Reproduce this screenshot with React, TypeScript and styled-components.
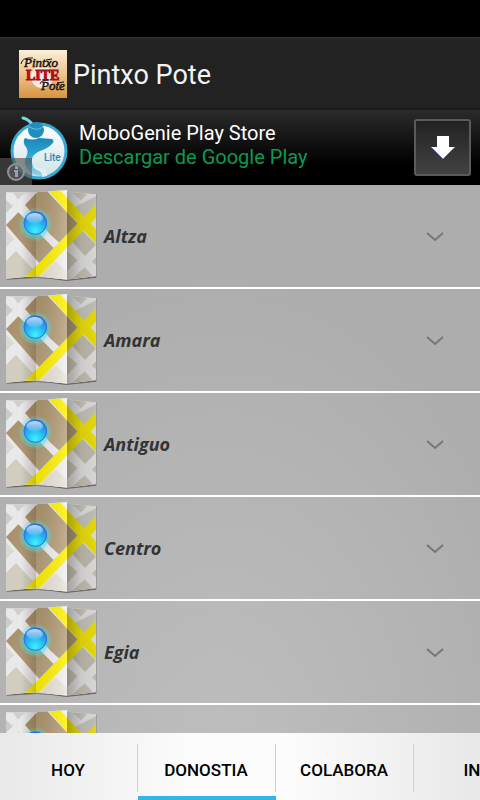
import React from "react";
import styled, { createGlobalStyle } from "styled-components";

const GlobalStyle = createGlobalStyle`
  * { box-sizing: border-box; }
  body { margin: 0; background: #000; font-family: Roboto, sans-serif; }
  button { font-family: inherit; border: 0; margin: 0; padding: 0; background: none; cursor: pointer; }
  svg { display: block; flex: none; }
`;

const Screen = styled.div`
  display: flex;
  flex-direction: column;
  height: 100vh;
  overflow: hidden;
`;

const StatusBar = styled.div`
  flex: none;
  height: 37px;
  background: #000;
`;

const ActionBar = styled.header`
  flex: none;
  display: flex;
  align-items: center;
  gap: 6px;
  height: 73px;
  padding: 0 19px 1px;
  background: linear-gradient(#222, #222 68px, #171717);
  border-top: 2px solid #2c2c2c;
`;

const Title = styled.h1`
  margin: 0;
  padding-top: 2px;
  font-size: 27px;
  line-height: 32px;
  font-weight: 400;
  color: #f3f3f3;
`;

const Ad = styled.section`
  position: relative;
  flex: none;
  display: flex;
  align-items: center;
  height: 75px;
  padding: 0 9px 0 8px;
  background: linear-gradient(#2b2b2b, #000 72%);
`;

const AdLink = styled.a`
  flex: 1;
  display: flex;
  align-items: center;
  gap: 11px;
  text-decoration: none;
`;

const AdText = styled.span`
  display: flex;
  flex-direction: column;
  padding-bottom: 6px;
  font-size: 20px;
  line-height: 24px;
  white-space: nowrap;
`;

const AdLine = styled.span<{ $green?: boolean }>`
  color: ${(p) => (p.$green ? "#0b9a50" : "#fff")};
`;

const Download = styled.button`
  display: flex;
  align-items: center;
  justify-content: center;
  width: 57px;
  height: 57px;
  border: 2px solid #5b5b5b;
  border-radius: 3px;
  background: linear-gradient(#222, #424242);
`;

const AdInfo = styled.button`
  position: absolute;
  left: 0;
  bottom: 0;
  display: flex;
  align-items: center;
  justify-content: center;
  width: 32px;
  height: 27px;
  background: rgba(85, 85, 85, 0.65);
`;

const List = styled.ul`
  flex: 1;
  min-height: 0;
  margin: 0;
  padding: 0;
  overflow: hidden;
  list-style: none;
  background: radial-gradient(ellipse 70% 90% at 46% 105%, #bebebe, #b6b6b6 50%, #adadad);
`;

const Row = styled.li`
  height: 104px;
  border-bottom: 2px solid #fff;
`;

const RowButton = styled.button`
  display: flex;
  align-items: center;
  gap: 4px;
  width: 100%;
  height: 102px;
  padding-right: 36px;
  text-align: left;
`;

const Name = styled.span`
  flex: 1;
  font: italic 700 18px/26px "Open Sans", sans-serif;
  color: #333;
`;

const Tabs = styled.nav`
  flex: none;
  display: flex;
  height: 67px;
  overflow: hidden;
  background: linear-gradient(90deg, #e9e9e9, #fcfcfc 40%, #fcfcfc 60%, #e8e8e8);
`;

const Tab = styled.button<{ $active?: boolean }>`
  flex: none;
  display: flex;
  align-items: center;
  justify-content: center;
  min-width: 138px;
  padding: 10px 18px 0 16px;
  border-bottom: 4px solid ${(p) => (p.$active ? "#33b5e5" : "transparent")};
  background: linear-gradient(#cfcfcf, #cfcfcf) right 0 top 11px / 1px 48px no-repeat;
  background-origin: border-box;
  font-size: 17px;
  line-height: 22px;
  font-weight: 500;
  color: #000;
`;

const WideTab = styled(Tab)`
  padding: 10px 48px 0 47px;
`;

const Script = styled.text`
  font: italic 400 13px "Liberation Serif", serif;
  fill: #181410;
  stroke: #181410;
  stroke-width: 0.5px;
`;

const Lite = styled.text`
  font: 700 14px "Liberation Serif", serif;
  fill: #c40d1c;
  stroke: #a80d18;
  stroke-width: 1px;
`;

const BadgeText = styled.text`
  font: 500 10px Roboto, sans-serif;
  fill: #2989b0;
`;

function AppLogo() {
  return (
    <svg width="48" height="48" viewBox="0 0 48 48" aria-hidden="true">
      <defs>
        <linearGradient id="sand" x1="0" y1="0" x2="0" y2="1">
          <stop offset="0" stopColor="#fcefd9" />
          <stop offset=".5" stopColor="#edc58b" />
          <stop offset="1" stopColor="#d79440" />
        </linearGradient>
      </defs>
      <path fill="url(#sand)" d="M0 0h48v48H0z" />
      <circle cx="23" cy="27" r="11" fill="#f5eee8" />
      <Script x="5" y="17">Pintxo</Script>
      <Lite x="7" y="30">LITE</Lite>
      <Script x="22" y="40">Pote</Script>
      <path d="M2 14Q3 7 14 8M27 10l6-1M21 34q1-4 9-4M38 33l7-1" fill="none" stroke="#181410" />
    </svg>
  );
}

function GenieLogo() {
  return (
    <svg width="60" height="66" viewBox="0 0 60 66" aria-hidden="true">
      <defs>
        <linearGradient id="genie" x1="0" y1="0" x2="0" y2="1">
          <stop offset="0" stopColor="#1c86b8" />
          <stop offset=".5" stopColor="#2cabd6" />
          <stop offset="1" stopColor="#9bd6e9" />
        </linearGradient>
        <linearGradient id="disc" x1="0" y1="0" x2="0" y2="1">
          <stop offset="0" stopColor="#fff" />
          <stop offset="1" stopColor="#cfe2e8" />
        </linearGradient>
      </defs>
      <circle cx="31" cy="36" r="27" fill="url(#disc)" stroke="#35a9d2" strokeWidth="3" />
      <path fill="url(#genie)" d="M17 23q8 3 14 0l13 1q3 2 0 5-5 5-12 7-10 4-8 12 2 5 8 7 5 2 4 6-13 1-17-8-4-5-1-11 3-5 0-10-4-5-1-9z" />
      <path fill="#e4eef1" d="M24 49q3 4 9 4 7 2 6 8l-5 1q1-4-3-6-6-2-7-7z" />
      <path d="M15 3q5 1 9 6" fill="none" stroke="#7bd6df" strokeWidth="3" strokeLinecap="round" />
      <circle cx="28" cy="15" r="8" fill="#238ebd" />
      <path d="M20 11q8 6 15 1" fill="none" stroke="#66c6dc" strokeWidth="1" />
      <BadgeText x="36" y="46">Lite</BadgeText>
    </svg>
  );
}

function InfoIcon() {
  return (
    <svg width="20" height="20" viewBox="0 0 20 20" aria-hidden="true">
      <circle cx="10" cy="10" r="8" fill="#5b6265" fillOpacity=".6" stroke="#8d9294" strokeWidth="2" />
      <path d="M8 8h4v7H9v-5H8zM9 4h3v3H9z" fill="#9aa0a2" />
    </svg>
  );
}

function MapArt() {
  return (
    <svg width="100" height="102" viewBox="0 0 300 306" aria-hidden="true">
      <path d="M20 274l89 3 92 6 88-9v4l-90 10q-45-8-90-9l-89 5z" fill="#4c4a46" opacity=".7" />
      <path d="M286 28h5v246h-5z" fill="#777" opacity=".4" />
      <g clipPath="url(#sheet)">
        <path d="M0 0h300v306H0z" fill="#f1f1f2" />
        <path d="M30 10h56L54 44z" fill="#d6d7d3" />
        <path d="M18 44l20 20-20 20z" fill="#d2d3cf" />
        <path d="M75 60l40-42h26l96 102-56 56-31-28z" fill="url(#earth)" />
        <path d="M18 120l37-38 112 113-46 43z" fill="url(#earth)" />
        <path d="M18 136l24 26-24 25z" fill="#e0e0de" />
        <path d="M18 228l30-30 76 82-14 10H18z" fill="#d8d4c6" />
        <path d="M122 272l44-44 36 32v30h-80z" fill="#e9e5db" />
        <path d="M214 168l31-34 43 45-33 34z" fill="#cfccbe" />
        <path d="M206 10h70l-33 36zM288 34v40l-32 30-32-38z" fill="#d4d4cc" />
        <path d="M201 198l32 28-32 32z" fill="#d3d0c2" />
        <path d="M216 283l38-36 26 28z" fill="#d3d0c2" />
        <path d="M276 230l13-14v26z" fill="#d3d0c2" />
        <path d="M148 0l152 168M300 66L80 292" fill="none" stroke="#fff20a" strokeWidth="28" />
        <path d="M18 10h90v280H18z" fill="url(#foldA)" />
        <path d="M108 10h93v280h-93z" fill="url(#foldB)" />
        <path d="M201 10h88v280h-88z" fill="url(#foldC)" />
        <circle cx="106" cy="118" r="52" fill="url(#glow)" />
      </g>
      <circle cx="106" cy="114" r="34" fill="url(#ball)" stroke="#2e72d2" strokeWidth="3" />
      <ellipse cx="104" cy="100" rx="25" ry="16" fill="url(#shine)" />
    </svg>
  );
}

function MapDefs() {
  return (
    <svg width="0" height="0" aria-hidden="true">
      <defs>
        <clipPath id="sheet">
          <path d="M18 22h90l93-7v5l87 8v245l-87 11-93-11-90 8z" />
        </clipPath>
        <linearGradient id="earth" x1="0" y1="0" x2="1" y2="1">
          <stop offset="0" stopColor="#ab946c" />
          <stop offset="1" stopColor="#bda684" />
        </linearGradient>
        <linearGradient id="foldA" x1="0" x2="1">
          <stop offset="0" stopColor="#30200f" stopOpacity=".04" />
          <stop offset=".5" stopColor="#30200f" stopOpacity=".04" />
          <stop offset="1" stopColor="#30200f" stopOpacity=".26" />
        </linearGradient>
        <linearGradient id="foldB" x1="0" x2="1">
          <stop offset="0" stopColor="#000" stopOpacity=".07" />
          <stop offset="1" stopColor="#fff" stopOpacity=".15" />
        </linearGradient>
        <linearGradient id="foldC" x1="0" x2="1">
          <stop offset="0" stopColor="#15130a" stopOpacity=".36" />
          <stop offset=".5" stopColor="#15130a" stopOpacity=".17" />
          <stop offset="1" stopColor="#15130a" stopOpacity=".12" />
        </linearGradient>
        <radialGradient id="glow">
          <stop offset=".5" stopColor="#25d7ed" stopOpacity=".9" />
          <stop offset="1" stopColor="#65e5ee" stopOpacity="0" />
        </radialGradient>
        <radialGradient id="ball" cx=".5" cy=".85" r=".8">
          <stop offset="0" stopColor="#42f2ff" />
          <stop offset=".5" stopColor="#24b6f4" />
          <stop offset="1" stopColor="#2b72de" />
        </radialGradient>
        <linearGradient id="shine" x1="0" y1="0" x2="0" y2="1">
          <stop offset="0" stopColor="#fff" stopOpacity=".75" />
          <stop offset="1" stopColor="#fff" stopOpacity=".08" />
        </linearGradient>
      </defs>
    </svg>
  );
}

const places = ["Altza", "Amara", "Antiguo", "Centro", "Egia", ""];

export default function App() {
  return (
    <Screen>
      <GlobalStyle />
      <StatusBar />
      <ActionBar>
        <AppLogo />
        <Title>Pintxo Pote</Title>
      </ActionBar>
      <Ad>
        <AdLink href="#download">
          <GenieLogo />
          <AdText>
            <AdLine>MoboGenie Play Store</AdLine>
            <AdLine $green>Descargar de Google Play</AdLine>
          </AdText>
        </AdLink>
        <Download aria-label="Descargar">
          <svg width="26" height="26" viewBox="0 0 26 26" aria-hidden="true">
            <path d="M7 1h12v11h6L13 24 1 12h6z" fill="#fff" />
            <path d="M2 13l11 11 11-11" fill="none" stroke="#6474c4" strokeWidth="1" />
          </svg>
        </Download>
        <AdInfo aria-label="Información">
          <InfoIcon />
        </AdInfo>
      </Ad>
      <MapDefs />
      <List>
        {places.map((name) => (
          <Row key={name}>
            <RowButton>
              <MapArt />
              <Name>{name}</Name>
              <svg width="18" height="12" viewBox="0 0 18 12" aria-hidden="true">
                <path d="M1 3l8 7 8-7" fill="none" stroke="#777" strokeWidth="2" />
              </svg>
            </RowButton>
          </Row>
        ))}
      </List>
      <Tabs>
        <Tab>HOY</Tab>
        <Tab $active>DONOSTIA</Tab>
        <Tab>COLABORA</Tab>
        <WideTab>INFO</WideTab>
      </Tabs>
    </Screen>
  );
}
